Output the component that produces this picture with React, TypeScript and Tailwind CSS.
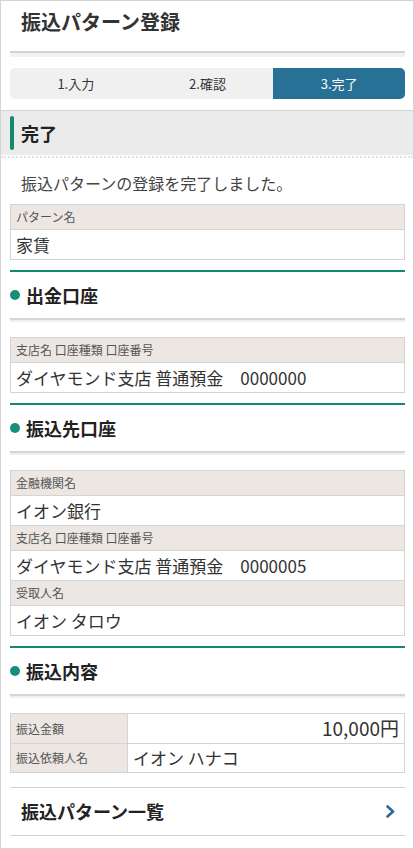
import React from "react";

const font = {
  fontFamily: '"Noto Sans CJK JP", "Noto Sans", sans-serif',
};

function SectionHeading({ title }: { title: string }) {
  return (
    <div className="ml-[9px] mr-[8px]">
      <div className="h-[2px] bg-[#14896f]" />
      <div className="h-[46px] flex items-center">
        <span className="w-[10px] h-[10px] rounded-full bg-[#16907a] mr-[6px]" />
        <span className="text-[18px] font-bold text-[#222] leading-none">{title}</span>
      </div>
      <div className="h-[2px] bg-[#d5d5d5]" />
      <div className="h-[2px] bg-[#efefef]" />
    </div>
  );
}

function Label({ children }: { children: React.ReactNode }) {
  return (
    <div className="h-[25px] bg-[#ece7e3] border-b border-[#d4d4d4] flex items-center px-[5px] text-[12px] text-[#555]">
      {children}
    </div>
  );
}

function Value({ children, last }: { children: React.ReactNode; last?: boolean }) {
  return (
    <div
      className={
        last
          ? "h-[29px] flex items-center px-[5px] text-[17px] text-[#333]"
          : "h-[30px] flex items-center px-[5px] text-[17px] text-[#333] border-b border-[#d4d4d4]"
      }
    >
      {children}
    </div>
  );
}

export default function App() {
  return (
    <div
      className="w-[414px] h-[849px] border border-[#d4d4d4] bg-white overflow-hidden"
      style={font}
    >
      {/* Title */}
      <div className="h-[50px] pl-[20px] pt-[8px]">
        <h1 className="text-[20px] font-bold leading-[26px] text-[#333]">振込パターン登録</h1>
      </div>
      <div className="ml-[9px] mr-[8px]">
        <div className="h-[2px] bg-[#d3d3d3]" />
        <div className="h-[4px] bg-[#f2f2f2]" />
      </div>

      {/* Steps */}
      <div className="ml-[9px] mr-[8px] mt-[11px] h-[31px] rounded-[5px] bg-[#f0f0f0] grid grid-cols-3 overflow-hidden text-[13px] text-[#333]">
        <div className="flex items-center justify-center">1.入力</div>
        <div className="flex items-center justify-center">2.確認</div>
        <div className="flex items-center justify-center bg-[#277197] text-white">3.完了</div>
      </div>

      {/* Section header */}
      <div className="mt-[11px] border-t border-[#d4d4d4] bg-[#ebebeb] h-[45px] flex items-center pl-[9px]">
        <span className="w-[4px] h-[34px] rounded-[2px] bg-[#14896f]" />
        <span className="ml-[7px] text-[18px] font-bold text-[#222]">完了</span>
      </div>
      <div className="h-[1px] bg-white" />
      <div className="h-[2px] border-t-2 border-dotted border-[#e4e4e4]" />

      {/* Message */}
      <div className="h-[46px] pt-[15px] pl-[20px] text-[16px] leading-[20px] text-[#444]">
        振込パターンの登録を完了しました。
      </div>

      <div className="ml-[9px] mr-[8px] border border-[#d4d4d4]">
        <Label>パターン名</Label>
        <Value last>家賃</Value>
      </div>

      <div className="mt-[10px]">
        <SectionHeading title="出金口座" />
      </div>
      <div className="ml-[9px] mr-[8px] mt-[15px] border border-[#d4d4d4]">
        <Label>支店名 口座種類 口座番号</Label>
        <Value last>ダイヤモンド支店 普通預金　0000000</Value>
      </div>

      <div className="mt-[10px]">
        <SectionHeading title="振込先口座" />
      </div>
      <div className="ml-[9px] mr-[8px] mt-[15px] border border-[#d4d4d4]">
        <Label>金融機関名</Label>
        <Value>イオン銀行</Value>
        <Label>支店名 口座種類 口座番号</Label>
        <Value>ダイヤモンド支店 普通預金　0000005</Value>
        <Label>受取人名</Label>
        <Value last>イオン タロウ</Value>
      </div>

      <div className="mt-[10px]">
        <SectionHeading title="振込内容" />
      </div>
      <div className="ml-[9px] mr-[8px] mt-[15px] border border-[#d4d4d4]">
        <div className="flex h-[30px] border-b border-[#d4d4d4]">
          <div className="w-[117px] bg-[#ece7e3] border-r border-[#d4d4d4] flex items-center px-[5px] text-[12px] text-[#555]">
            振込金額
          </div>
          <div className="flex-1 flex items-center justify-end pr-[5px] text-[19px] text-[#333]">
            10,000円
          </div>
        </div>
        <div className="flex h-[28px]">
          <div className="w-[117px] bg-[#ece7e3] border-r border-[#d4d4d4] flex items-center px-[5px] text-[12px] text-[#555]">
            振込依頼人名
          </div>
          <div className="flex-1 flex items-center px-[5px] text-[17px] text-[#333]">
            イオン ハナコ
          </div>
        </div>
      </div>

      {/* Link */}
      <div className="ml-[9px] mr-[8px] mt-[14px] border-t border-b border-[#d4d4d4] h-[49px] flex items-center justify-between pl-[11px] pr-[10px]">
        <span className="text-[18px] font-bold text-[#222]">振込パターン一覧</span>
        <svg width="9" height="13" viewBox="0 0 9 13" fill="none">
          <path d="M1.5 1.5 L7 6.5 L1.5 11.5" stroke="#2a6a94" strokeWidth="2.6" strokeLinecap="round" strokeLinejoin="round" />
        </svg>
      </div>
    </div>
  );
}
